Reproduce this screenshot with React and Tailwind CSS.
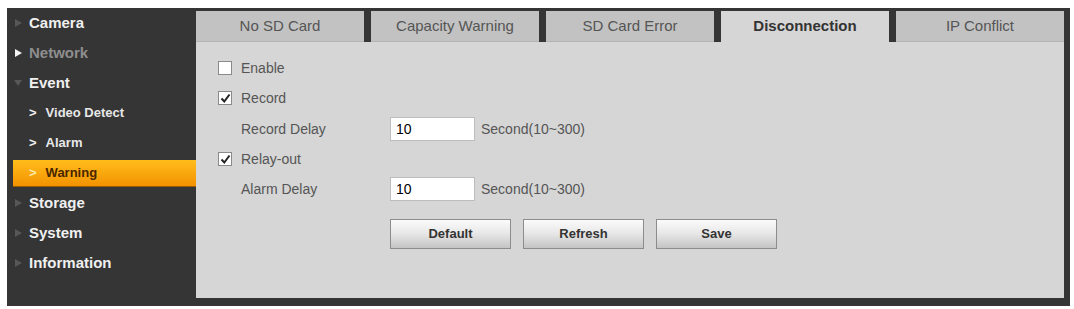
import { useState } from 'react';

const TABS = ['No SD Card', 'Capacity Warning', 'SD Card Error', 'Disconnection', 'IP Conflict'];

function Tri({ down, color }) {
  return down ? (
    <svg width="8" height="10" viewBox="0 0 8 10" className="shrink-0">
      <path d="M0 2 L8 2 L4 8 Z" fill={color} />
    </svg>
  ) : (
    <svg width="8" height="10" viewBox="0 0 8 10" className="shrink-0">
      <path d="M1 1 L8 5 L1 9 Z" fill={color} />
    </svg>
  );
}

function MainItem({ label, tri = '#575757', down, text = 'text-[#f0f0f0]' }) {
  return (
    <div className="h-[30px] flex items-center pl-[7px] gap-[7px]">
      <Tri down={down} color={tri} />
      <span className={`text-[15px] font-bold ${text}`}>{label}</span>
    </div>
  );
}

function SubItem({ label, active }) {
  if (active) {
    return (
      <div className="h-[30px] flex items-center pl-[6px]">
        <div className="flex-1 h-[27px] flex items-center pl-[16px] gap-[9px] bg-gradient-to-b from-[#ffbd1a] to-[#f39200] border-b border-[#9a5a00]">
          <span className="text-[13px] font-bold text-[#ffe9a8]">&gt;</span>
          <span className="text-[13px] font-bold text-[#4a2600]">{label}</span>
        </div>
      </div>
    );
  }
  return (
    <div className="h-[30px] flex items-center pl-[22px] gap-[9px]">
      <span className="text-[13px] font-bold text-[#f0f0f0]">&gt;</span>
      <span className="text-[13px] font-bold text-[#e8e8e8]">{label}</span>
    </div>
  );
}

function Check({ checked, onClick }) {
  return (
    <button
      onClick={onClick}
      className="w-[14px] h-[14px] bg-white border border-[#8a8a8a] flex items-center justify-center shrink-0"
    >
      {checked && (
        <svg width="11" height="11" viewBox="0 0 11 11">
          <path d="M1.5 5.5 L4.3 8.5 L9.5 1.5" stroke="#222" strokeWidth="2" fill="none" />
        </svg>
      )}
    </button>
  );
}

function Btn({ children }) {
  return (
    <button className="w-[121px] h-[30px] border border-[#8c8c8c] bg-gradient-to-b from-[#fbfbfb] via-[#e6e6e6] to-[#c4c4c4] text-[13px] font-bold text-[#333]">
      {children}
    </button>
  );
}

export default function App() {
  const [tab, setTab] = useState(3);
  const [enable, setEnable] = useState(false);
  const [record, setRecord] = useState(true);
  const [relay, setRelay] = useState(true);

  return (
    <div className="w-full h-[309px] bg-white pt-[8px] pl-[7px] pr-[4px] font-['Liberation_Sans',Arial,sans-serif]">
      <div className="h-[298px] flex bg-[#353535]">
        {/* sidebar */}
        <div className="w-[189px] shrink-0 flex flex-col">
          <MainItem label="Camera" />
          <MainItem label="Network" tri="#f5f5f5" text="text-[#8e8e8e]" />
          <MainItem label="Event" down />
          <SubItem label="Video Detect" />
          <SubItem label="Alarm" />
          <SubItem label="Warning" active />
          <MainItem label="Storage" />
          <MainItem label="System" />
          <MainItem label="Information" />
        </div>

        {/* main */}
        <div className="flex-1 flex flex-col pt-[3px] pr-[6px]">
          <div className="flex gap-[7px] h-[31px] shrink-0">
            {TABS.map((t, i) => (
              <button
                key={t}
                onClick={() => setTab(i)}
                className={
                  i === tab
                    ? 'flex-1 bg-[#d6d6d6] text-[15px] font-bold text-[#333]'
                    : 'flex-1 bg-[#c2c2c2] border-b border-[#b4b4b4] text-[15px] text-[#555]'
                }
              >
                {t}
              </button>
            ))}
          </div>

          <div className="flex-1 bg-[#d6d6d6] pl-[22px] pt-[11px] text-[14px] text-[#555]">
            <div className="h-[30px] flex items-center gap-[9px]">
              <Check checked={enable} onClick={() => setEnable(!enable)} />
              <span>Enable</span>
            </div>
            <div className="h-[30px] flex items-center gap-[9px]">
              <Check checked={record} onClick={() => setRecord(!record)} />
              <span>Record</span>
            </div>
            <div className="h-[32px] flex items-center pl-[23px]">
              <span className="w-[149px]">Record Delay</span>
              <input
                defaultValue="10"
                className="w-[85px] h-[24px] bg-white border border-[#bdbdbd] px-[5px] text-[14px] text-black outline-none"
              />
              <span className="ml-[6px]">Second(10~300)</span>
            </div>
            <div className="h-[28px] flex items-center gap-[9px]">
              <Check checked={relay} onClick={() => setRelay(!relay)} />
              <span>Relay-out</span>
            </div>
            <div className="h-[32px] flex items-center pl-[23px]">
              <span className="w-[149px]">Alarm Delay</span>
              <input
                defaultValue="10"
                className="w-[85px] h-[24px] bg-white border border-[#bdbdbd] px-[5px] text-[14px] text-black outline-none"
              />
              <span className="ml-[6px]">Second(10~300)</span>
            </div>
            <div className="flex gap-[12px] pl-[172px] mt-[14px]">
              <Btn>Default</Btn>
              <Btn>Refresh</Btn>
              <Btn>Save</Btn>
            </div>
          </div>
          <div className="h-[8px] shrink-0" />
        </div>
      </div>
    </div>
  );
}
